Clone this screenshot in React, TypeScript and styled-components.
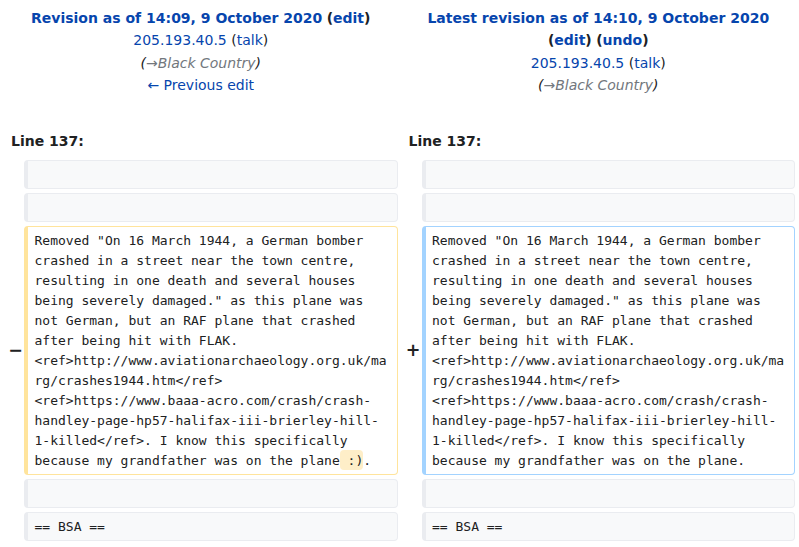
import React from "react";
import styled, { createGlobalStyle, css } from "styled-components";

const Global = createGlobalStyle`
  html, body { margin: 0; padding: 0; background: #fff; overflow: hidden; }
  body {
    font-family: "DejaVu Sans", "Noto Sans", sans-serif;
    font-size: 14px;
    line-height: 1.6;
    color: #202122;
  }
`;

const DiffGrid = styled.div`
  display: grid;
  grid-template-columns: 16px minmax(0, 1fr) 16px minmax(0, 1fr);
  gap: 4px;
  padding: 4px;
`;

const Title = styled.div`
  grid-column: span 2;
  text-align: center;
  padding: 3px 7px 3px;
  line-height: 22.33px;
`;

const Link = styled.a<{ $bold?: boolean }>`
  color: #0645ad;
  text-decoration: none;
  font-weight: ${(p) => (p.$bold ? "bold" : "normal")};
`;

const Strong = styled.strong`
  font-weight: bold;
`;

const Comment = styled.span`
  font-style: italic;
  color: #202122;
`;

const CommentText = styled.span`
  color: #72777d;
`;

const LineNo = styled.div`
  grid-column: span 2;
  font-weight: bold;
  padding: 27px 7px 4px;
  line-height: 22px;
`;

const Marker = styled.div`
  display: flex;
  align-items: center;
  justify-content: flex-end;
  margin-right: -3px;
  font-weight: bold;
  font-size: 17.5px;
  line-height: 1.2;
  color: #202122;
`;

type Kind = "context" | "deleted" | "added";

const kindStyles: Record<Kind, ReturnType<typeof css>> = {
  context: css`
    background: #f8f9fa;
    border-color: #eaecf0;
  `,
  deleted: css`
    background: #fff;
    border-color: #ffe49c;
  `,
  added: css`
    background: #fff;
    border-color: #a3d3ff;
  `,
};

const Content = styled.div<{ $kind: Kind }>`
  font-family: "DejaVu Sans Mono", "Liberation Mono", monospace;
  font-size: 13px;
  line-height: 20px;
  color: #202122;
  white-space: pre-wrap;
  overflow-wrap: break-word;
  border-style: solid;
  border-width: 1px 1px 1px 4px;
  border-radius: 4px;
  padding: 3.5px 6.5px;
  min-height: 20px;
  ${(p) => kindStyles[p.$kind]}
`;

const Change = styled.span`
  background: #feeec8;
  border-radius: 4px;
  padding: 0.2em 0;
`;

const base =
  'Removed "On 16 March 1944, a German bomber crashed in a street near the town centre, resulting in one death and several houses being severely damaged." as this plane was not German, but an RAF plane that crashed after being hit with FLAK. <ref>http://www.aviationarchaeology.org.uk/marg/crashes1944.htm</ref> <ref>https://www.baaa-acro.com/crash/crash-handley-page-hp57-halifax-iii-brierley-hill-1-killed</ref>. I know this specifically because my grandfather was on the plane';

export default function App() {
  return (
    <>
      <Global />
      <DiffGrid>
        <Title>
          <div>
            <Link $bold href="#">Revision as of 14:09, 9 October 2020</Link>{" "}
            <Strong>
              (<Link $bold href="#">edit</Link>)
            </Strong>
          </div>
          <div>
            <Link href="#">205.193.40.5</Link> (<Link href="#">talk</Link>)
          </div>
          <div>
            <Comment>
              (<CommentText>→Black Country</CommentText>)
            </Comment>
          </div>
          <div>
            <Link href="#">← Previous edit</Link>
          </div>
        </Title>
        <Title>
          <div>
            <Link $bold href="#">Latest revision as of 14:10, 9 October 2020</Link>{" "}
            <Strong>
              (<Link $bold href="#">edit</Link>)
            </Strong>{" "}
            <Strong>
              (<Link $bold href="#">undo</Link>)
            </Strong>
          </div>
          <div>
            <Link href="#">205.193.40.5</Link> (<Link href="#">talk</Link>)
          </div>
          <div>
            <Comment>
              (<CommentText>→Black Country</CommentText>)
            </Comment>
          </div>
        </Title>

        <LineNo>Line 137:</LineNo>
        <LineNo>Line 137:</LineNo>

        <Marker />
        <Content $kind="context">{"\u00a0"}</Content>
        <Marker />
        <Content $kind="context">{"\u00a0"}</Content>

        <Marker />
        <Content $kind="context">{"\u00a0"}</Content>
        <Marker />
        <Content $kind="context">{"\u00a0"}</Content>

        <Marker>−</Marker>
        <Content $kind="deleted">
          {base}
          <Change> :)</Change>.
        </Content>
        <Marker>+</Marker>
        <Content $kind="added">{base + "."}</Content>

        <Marker />
        <Content $kind="context">{"\u00a0"}</Content>
        <Marker />
        <Content $kind="context">{"\u00a0"}</Content>

        <Marker />
        <Content $kind="context">== BSA ==</Content>
        <Marker />
        <Content $kind="context">== BSA ==</Content>
      </DiffGrid>
    </>
  );
}
